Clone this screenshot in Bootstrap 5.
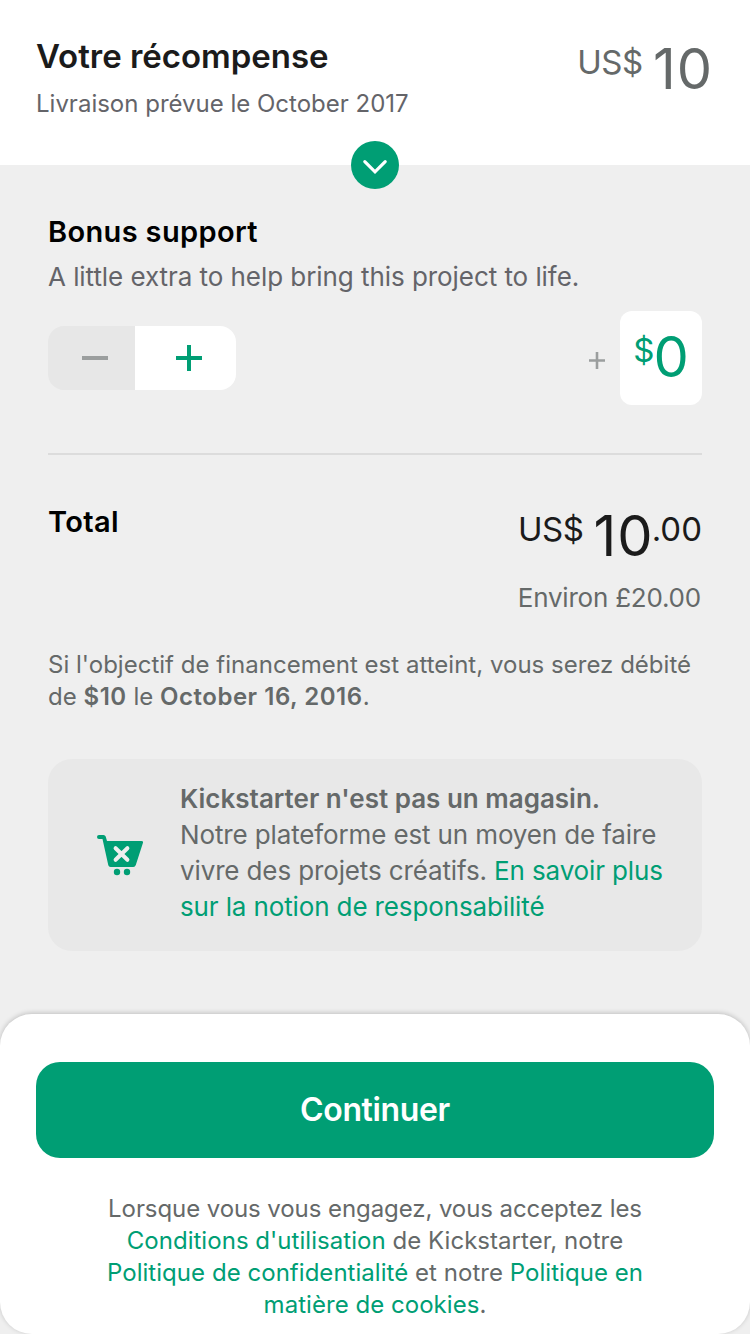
<!DOCTYPE html>
<html lang="fr">
<head>
<meta charset="utf-8">
<meta name="viewport" content="width=device-width, initial-scale=1">
<title>Votre récompense</title>
<link href="https://cdn.jsdelivr.net/npm/bootstrap@5.3.0/dist/css/bootstrap.min.css" rel="stylesheet">
<style>
:root { --ks-green: #009e74; --ks-grey: #656969; --ks-slate: #646469; --ks-ink: #1b1b1b; }
body { font-family: Inter, "Liberation Sans", sans-serif; background: #efefef; color: var(--ks-grey); height: 1334px; overflow: hidden; }
a { color: var(--ks-green); text-decoration: none; }
strong { font-weight: 600; }
.reward { height: 165px; padding: 36px 37px 0 36px; }
.reward-title { font-size: 33px; line-height: 40px; font-weight: 600; letter-spacing: -.02px; color: var(--ks-ink); }
.reward-date { font-size: 24px; line-height: 32px; margin-top: 12px; color: var(--ks-slate); }
.toggle { width: 48px; height: 48px; bottom: -24px; left: 351px; background: var(--ks-green); }
.amount { font-size: 56px; line-height: 67px; letter-spacing: 1px; }
.unit { font-size: 33px; line-height: 40px; margin-top: 6px; }
.currency { letter-spacing: -.4px; margin-right: 10px; }
.pledge { padding: 49px 48px 0; }
.section-title { font-size: 29px; line-height: 36px; font-weight: 600; letter-spacing: .35px; color: #000; }
.hint { font-size: 26px; line-height: 32px; margin-top: 11px; letter-spacing: -.06px; color: var(--ks-slate); }
.contribution { margin-top: 18px; }
.stepper { width: 188px; height: 64px; border-radius: 16px; }
.step-minus { width: 87px; background: #e7e7e7; }
.step-plus { background: #fff; }
.stepper .btn { padding: 0 0 0 6px; }
.bonus { width: 82px; height: 94px; border-radius: 12px; color: var(--ks-green); }
.bonus-unit { font-size: 33px; line-height: 40px; margin-top: 19px; }
.bonus-value { font-size: 56px; line-height: 66px; margin-top: 13px; margin-left: -1px; }
.rule { height: 2px; background: #dcdcdc; margin-top: 48px; }
.total { margin-top: 49px; color: var(--ks-ink); }
.total .currency, .total .cents { margin-top: 5px; }
.total .amount { line-height: 66px; margin: -1px -2px 1px 0; }
.approx { font-size: 26px; line-height: 32px; margin-top: 12px; letter-spacing: -.22px; padding-right: 1px; }
.debit { font-size: 24px; line-height: 32px; margin-top: 35px; letter-spacing: .02px; }
.debit strong { letter-spacing: .52px; }
.notice { height: 192px; margin-top: 46px; border-radius: 24px; background: #e8e8e8; padding: 22px 24px 0 48px; }
.notice-icon { margin-top: 53px; }
.notice-text { font-size: 26px; line-height: 36px; margin-left: 36px; letter-spacing: -.13px; }
.notice-text strong { letter-spacing: 0; }
.sheet { height: 320px; margin-top: 63px; border-radius: 32px; padding: 48px 36px 0; box-shadow: 0 -1px 5px rgba(0,0,0,.2); }
.btn-continue { height: 96px; border-radius: 24px; background: var(--ks-green); color: #fff; font-size: 32px; font-weight: 600; letter-spacing: -.35px; padding: 0; }
.btn-continue:hover { background: var(--ks-green); color: #fff; }
.legal { font-size: 24px; line-height: 32px; margin-top: 35px; letter-spacing: .04px; }
.legal-intro { letter-spacing: -.08px; }
</style>
</head>
<body>
<header class="reward bg-white position-relative d-flex justify-content-between align-items-start">
  <div>
    <h1 class="reward-title mb-0">Votre récompense</h1>
    <p class="reward-date mb-0">Livraison prévue le October 2017</p>
  </div>
  <div class="d-flex align-items-start">
    <span class="unit currency">US$</span><span class="amount">10</span>
  </div>
  <button class="toggle btn rounded-circle border-0 p-0 position-absolute d-flex" aria-label="Afficher">
    <svg width="48" height="48" viewBox="0 0 48 48" fill="none" stroke="#fff" stroke-width="3.200" stroke-linecap="round"><path d="M13.800 20.600 24 30.800 34.200 20.600"/></svg>
  </button>
</header>

<main class="pledge">
  <h2 class="section-title mb-0">Bonus support</h2>
  <p class="hint mb-0">A little extra to help bring this project to life.</p>
  <div class="contribution d-flex justify-content-between align-items-center">
    <div class="stepper d-flex overflow-hidden">
      <button class="step-minus btn border-0 rounded-0 d-flex align-items-center justify-content-center" aria-label="Moins">
        <svg width="26" height="26" viewBox="0 0 26 26"><path d="M0 13H26" stroke="#9b9e9e" stroke-width="4"/></svg>
      </button>
      <button class="step-plus btn flex-fill border-0 rounded-0 d-flex align-items-center justify-content-center" aria-label="Plus">
        <svg width="26" height="26" viewBox="0 0 26 26"><path d="M0 13H26M13 0V26" stroke="#009e74" stroke-width="4"/></svg>
      </button>
    </div>
    <div class="d-flex align-items-center">
      <svg class="mt-1" width="16" height="17" viewBox="0 0 16 17" style="margin-right:15px"><path d="M0 8.500H16M8 0V17" stroke="#9b9e9e" stroke-width="2.600"/></svg>
      <div class="bonus bg-white d-flex justify-content-center align-items-start">
        <span class="bonus-unit">$</span><span class="bonus-value">0</span>
      </div>
    </div>
  </div>
  <div class="rule"></div>

  <div class="total d-flex justify-content-between align-items-start">
    <h2 class="section-title mb-0">Total</h2>
    <div class="d-flex align-items-start">
      <span class="unit currency">US$</span><span class="amount">10</span><span class="unit cents">.00</span>
    </div>
  </div>
  <p class="approx text-end mb-0">Environ £20.00</p>
  <p class="debit mb-0">Si l'objectif de financement est atteint, vous serez débité<br>de <strong>$10</strong> le <strong>October 16, 2016</strong>.</p>

  <div class="notice d-flex align-items-start">
    <svg class="notice-icon flex-shrink-0" width="48" height="42" viewBox="0 0 48 42">
      <path fill="#009e74" d="M3 1H7.500Q9.200 1 9.700 2.500L11 7H45.500Q47.600 7 46.900 9L39.800 31Q39.100 33 37.300 33H14.500Q12.800 33 12.300 31.300L6.500 5H3A2 2 0 0 1 3 1Z"/>
      <path d="M19.600 14.200 31.400 25.800M31.400 14.200 19.600 25.800" stroke="#efefef" stroke-width="4" stroke-linecap="round"/>
      <circle cx="21" cy="38" r="3.200" fill="#009e74"/><circle cx="31" cy="38" r="3.200" fill="#009e74"/>
    </svg>
    <p class="notice-text mb-0"><strong>Kickstarter n'est pas un magasin.</strong><br>Notre plateforme est un moyen de faire<br>vivre des projets créatifs. <a href="#">En savoir plus<br>sur la notion de responsabilité</a></p>
  </div>
</main>

<footer class="sheet bg-white">
  <button class="btn-continue btn w-100 border-0">Continuer</button>
  <p class="legal text-center mb-0"><span class="legal-intro">Lorsque vous vous engagez, vous acceptez les</span><br><a href="#">Conditions d'utilisation</a> de Kickstarter, notre<br><a href="#">Politique de confidentialité</a> et notre <a href="#">Politique en<br>matière de cookies</a>.</p>
</footer>
<script src="https://cdn.jsdelivr.net/npm/bootstrap@5.3.0/dist/js/bootstrap.bundle.min.js"></script>
</body>
</html>
